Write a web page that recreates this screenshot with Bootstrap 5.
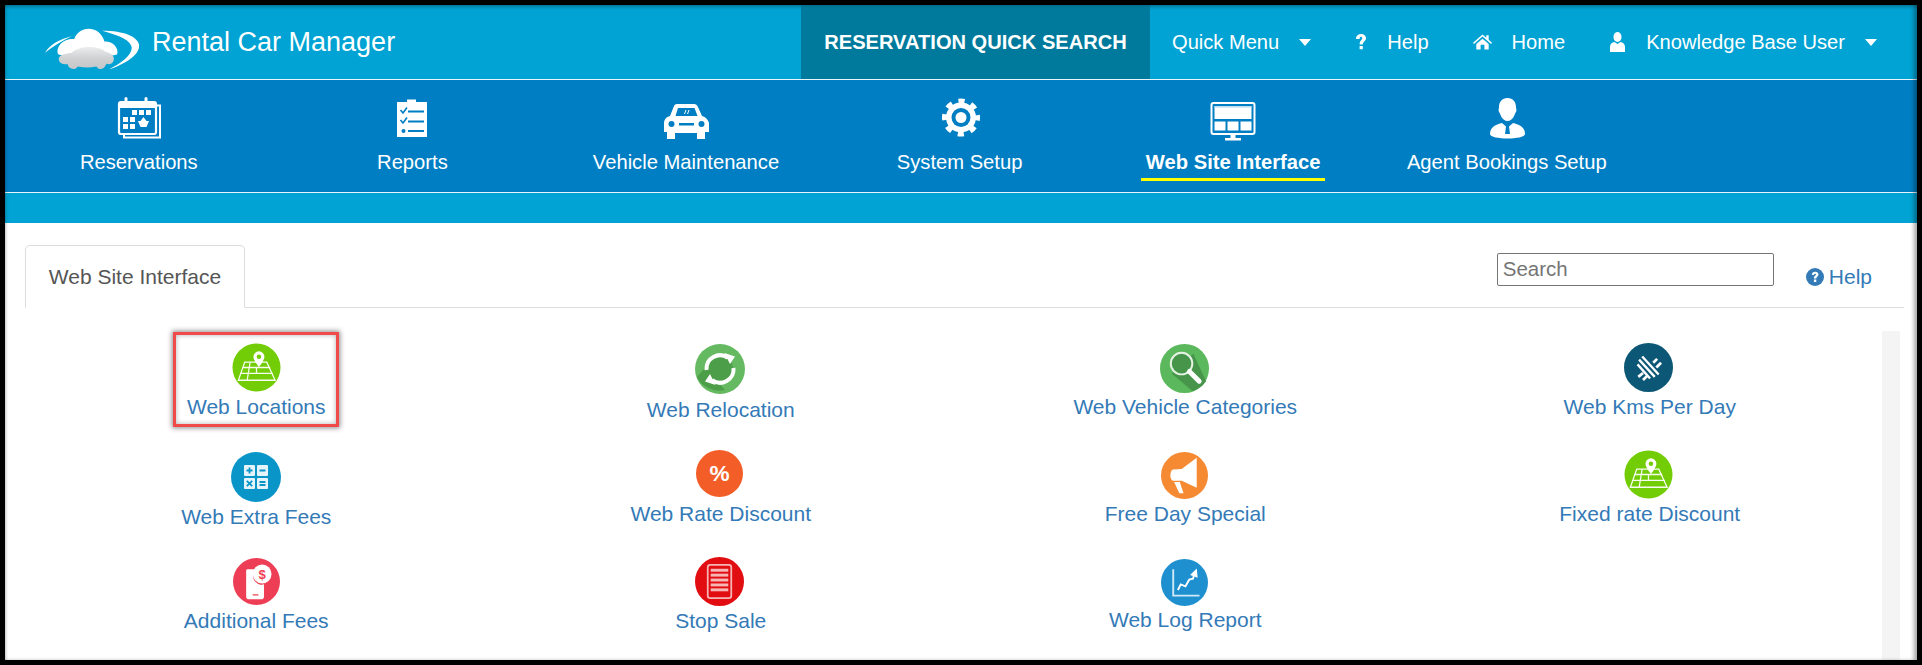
<!DOCTYPE html>
<html lang="en">
<head>
<meta charset="utf-8">
<title>Rental Car Manager</title>
<link href="https://cdn.jsdelivr.net/npm/bootstrap@5.3.0/dist/css/bootstrap.min.css" rel="stylesheet">
<style>
html,body{height:665px;overflow:hidden;background:#000;font-family:"Liberation Sans",Arial,sans-serif;}
.frame{margin:5px 5px 5px 5px;height:655px;background:#fff;overflow:hidden;position:relative;}
.frame-shade{position:absolute;inset:0;pointer-events:none;box-shadow:inset -4px 0 4px -1px rgba(0,0,0,.35),inset 3px 0 3px -2px rgba(0,0,0,.25);z-index:5;}
.top-bar{height:75px;background:linear-gradient(#0086ad 0,#00a3d3 5px);border-bottom:1px solid #e8f6fb;color:#fff;padding-right:40px;}
.brand-logo{width:94px;height:42px;margin:23px 0 0 40px;flex:none;}
.brand-name{font-size:27px;line-height:30px;margin:22px 0 0 13px;color:#fff;}
.quick-search{width:349px;height:74px;background:#007a9c;color:#fff;font-weight:700;font-size:20.1px;display:flex;align-items:center;justify-content:center;text-decoration:none;}
.top-link{color:#fff;text-decoration:none;font-size:20.1px;display:flex;align-items:center;height:74px;margin-left:44px;}
.top-link svg{flex:none;}
.quick-menu{margin-left:22px;}
.gap-ic{margin-right:20px;}
.caret-mark{width:0;height:0;margin-left:20px;border-left:6px solid transparent;border-right:6px solid transparent;border-top:7px solid #fff;}
.mod-bar{height:113px;background:#007ec3;border-bottom:1px solid #e8f6fb;gap:6px;}
.mod-item{width:267.6px;flex:none;padding-top:17px;color:#fff;text-decoration:none;text-align:center;display:block;}
.mod-item svg{display:block;width:50px;height:44px;margin:0 auto 6px;}
.mod-label{display:inline-block;font-size:20.2px;line-height:30px;height:34px;padding:0 5px;}
.mod-item.current .mod-label{font-weight:700;border-bottom:3px solid #ff0;font-size:20.2px;}
.band{height:30px;background:#00a3d3;}
.work{padding:22px 13px 0 19px;}
.tab-head{margin-left:1px;height:63px;border-bottom:1px solid #ddd;align-items:flex-start;}
.tab-head .nav-link,.tab-head .nav-link.active{margin:0;height:63px;width:220px;padding:0;color:#555;font-size:21px;line-height:62px;text-align:center;background:#fff;border:1px solid #ddd;border-bottom-color:#fff;border-radius:5px 5px 0 0;}
.finder{width:277px;height:33px;margin:8px 32px 0 0;padding:0 5px 2px;font-size:20.5px;line-height:28px;border:1px solid #767676;border-radius:2px;color:#333;font-family:inherit;}
.finder::placeholder{color:#757575;}
.help-link{display:flex;align-items:center;gap:5px;font-size:21px;color:#337ab7;text-decoration:none;margin:19px 32px 0 0;line-height:26px;}
.help-link svg{width:18px;height:18px;}
.tile-zone{margin-top:23px;}
.tile-grid{width:1858px;padding-top:11px;flex:none;}
.tile-row{height:107px;}
.slide-rail{width:18px;flex:none;height:340px;background:#f4f4f4;}
.tile{display:block;color:#337ab7;text-decoration:none;font-size:21px;line-height:30px;text-align:center;}
.tile svg{display:block;margin-left:auto;margin-right:auto;}
.tile span{display:block;}
.s47{width:47px;height:47px}.s49{width:49px;height:49px}.s50{width:50px;height:50px}
.left1 svg{transform:translateX(-1px)}
.t0{padding-top:.5px}.t1{padding-top:1.5px}.t2{padding-top:2.5px}
.tile-marked{width:166px;height:95px;margin:-10px auto 0;border:3px solid #f04a4a;padding-top:7.5px;box-shadow:0 0 5px 1px rgba(0,0,0,.45),inset 0 0 5px rgba(0,0,0,.3);}
.gn span{margin-top:-1px}.g1 span{margin-top:1px}.g2 span{margin-top:2px}
</style>
</head>
<body>
<svg width="0" height="0" class="d-block position-absolute">
<defs><linearGradient id="car-shade" x1="0" y1="0" x2="0" y2="1"><stop offset="0" stop-color="#eceded"/><stop offset=".5" stop-color="#cfd1d3"/><stop offset="1" stop-color="#c4c6c8"/></linearGradient></defs>
<symbol id="map-ic" viewBox="0 0 50 50">
<circle cx="25" cy="25" r="24.5" fill="#73cd06"/>
<g fill="none" stroke="#fff" stroke-width="1.300" opacity=".95">
<path d="M13 19.500H23M30 19.500H35.500L44 38H6.500L13 19.500Z"/>
<path d="M11 25H39M9 31H41.500M18.500 19.500L15.500 38M25 25V31"/>
</g>
<path d="M27.500 8.500a5.600 5.600 0 0 1 5.600 5.600c0 3.700-5.600 10.400-5.600 10.400s-5.600-6.700-5.600-10.400a5.600 5.600 0 0 1 5.600-5.600Z" fill="#fff"/>
<circle cx="27.500" cy="14" r="2.300" fill="#73cd06"/>
</symbol>
</svg>
<div class="frame">
<div class="frame-shade"></div>
<header class="top-bar d-flex">
<svg class="brand-logo" viewBox="45 55 280 122">
<path d="M215 62C290 62 330 85 325 112C318 142 270 165 235 177C280 155 310 128 302 106C292 84 250 72 215 62Z" fill="#fff"/>
<path d="M45 127C60 102 90 86 125 78C95 92 70 107 45 127Z" fill="#fff"/>
<path d="M84 132C76 108 100 84 132 86C140 64 160 56 175 56C198 56 216 72 222 94C245 92 266 112 260 132C250 140 100 140 84 132Z" fill="#fff"/>
<path d="M86 148C84 134 105 129 125 127C145 106 205 104 225 124C240 128 252 134 250 148C248 160 238 163 228 160C222 178 205 180 198 168C180 172 160 172 143 168C135 180 116 178 112 161C98 164 88 158 86 148Z" fill="url(#car-shade)"/>
</svg>
<div class="brand-name">Rental Car Manager</div>
<a class="quick-search ms-auto" href="#">RESERVATION QUICK SEARCH</a>
<a class="top-link quick-menu" href="#">Quick Menu<span class="caret-mark"></span></a>
<a class="top-link" href="#"><svg class="gap-ic" width="12" height="18" viewBox="0 0 12 18"><path d="M1 6C1 2.500 3.500 1 6.200 1C9 1 11 2.800 11 5.200C11 8 7.800 8.500 7.800 11.500H4.600C4.600 7.500 7.200 7.300 7.200 5.300C7.200 4.300 6.800 3.800 6 3.800C5 3.800 4.600 4.700 4.600 6ZM4.600 13H7.800V16.200H4.600Z" fill="#fff"/></svg>Help</a>
<a class="top-link" href="#"><svg class="gap-ic" width="19" height="16" viewBox="0 0 20 16"><path d="M10 0L14 3.500V1H16.500V5.700L20 8.800L19 10L10 2.300L1 10L0 8.800ZM3.500 10L10 4.500L16.500 10V16H12V11H8V16H3.500Z" fill="#fff"/></svg>Home</a>
<a class="top-link" href="#"><svg class="gap-ic" width="17" height="20" viewBox="0 0 17 20"><ellipse cx="8.500" cy="5" rx="4" ry="5" fill="#fff"/><path d="M1 20V15C1 12 3 10.500 5.500 10L8.500 12L11.500 10C14 10.500 16 12 16 15V20Z" fill="#fff"/></svg>Knowledge Base User<span class="caret-mark"></span></a>
</header>

<nav class="mod-bar d-flex">
<a class="mod-item" href="#"><svg viewBox="0 0 50 44">
<path d="M43 8.500H46V40.500H10V37" fill="none" stroke="#fff" stroke-width="2"/>
<rect x="5" y="5" width="37" height="32" rx="2" fill="none" stroke="#fff" stroke-width="2.200"/>
<path d="M5 5H42V11H5Z" fill="#fff"/>
<path d="M12 1.500V7M32 1.500V7" stroke="#fff" stroke-width="3" stroke-linecap="round"/>
<g fill="#fff"><rect x="18" y="13" width="5" height="5"/><rect x="25" y="13" width="5" height="5"/><rect x="32" y="13" width="5" height="5"/><rect x="9" y="20" width="5" height="5"/><rect x="16" y="20" width="5" height="5"/><rect x="9" y="27" width="5" height="5"/><rect x="16" y="27" width="5" height="5"/><path d="M29.500 20L32.500 24H35L32.500 30H26.500L24 24H26.500Z"/></g></svg><span class="mod-label">Reservations</span></a>
<a class="mod-item" href="#"><svg viewBox="0 0 50 44">
<path d="M10 5H20V2.500H29V5H40V40H10Z" fill="#fff"/>
<g fill="none" stroke="#007ec3" stroke-width="1.600"><path d="M13.500 13L16 16L20 10.500M13.500 23L16 26L20 20.500"/><path d="M21 14.500H37M21 24.500H37M21 34H37" stroke-width="2"/></g>
<circle cx="16.500" cy="34" r="2" fill="#007ec3"/></svg><span class="mod-label">Reports</span></a>
<a class="mod-item" href="#"><svg viewBox="0 0 50 44">
<path d="M13 9C14 7 15.500 7 17 7H33C35 7 36 8 37 10L41 19C45 20 47 23 48 26V35H44V42H36V36H14V42H6V35H3V26C3 23 5 20 9 19Z" fill="#fff"/>
<path d="M14.500 19L17 11H33.500L36.500 19Z" fill="#007ec3"/>
<circle cx="10.500" cy="27" r="3" fill="#007ec3"/><circle cx="40.500" cy="27" r="3" fill="#007ec3"/><rect x="18" y="26" width="15" height="2.500" fill="#007ec3"/>
<path d="M25 13L23.500 17M28 13L26.500 17" stroke="#fff" stroke-width="1"/></svg><span class="mod-label">Vehicle Maintenance</span></a>
<a class="mod-item" href="#"><svg viewBox="0 0 50 44">
<circle cx="26" cy="20.500" r="16" fill="none" stroke="#fff" stroke-width="6" stroke-dasharray="6 6.570" stroke-dashoffset="3"/>
<circle cx="26" cy="20.500" r="15" fill="#fff"/><circle cx="26" cy="20.500" r="9.500" fill="#007ec3"/><circle cx="26" cy="20.500" r="5.500" fill="#fff"/></svg><span class="mod-label">System Setup</span></a>
<a class="mod-item current" href="#"><svg viewBox="0 0 50 44">
<rect x="3.500" y="6" width="43" height="31" rx="2" fill="none" stroke="#fff" stroke-width="2"/>
<rect x="6.500" y="9" width="37" height="13" fill="#fff"/><rect x="6.500" y="9" width="37" height="1.500" fill="#b8def0"/>
<g fill="#fff"><rect x="6.500" y="24.500" width="11" height="9"/><rect x="19.500" y="24.500" width="11" height="9"/><rect x="32.500" y="24.500" width="11" height="9"/><rect x="22.500" y="37" width="5" height="4"/><rect x="17" y="41" width="16" height="2.500"/></g></svg><span class="mod-label">Web Site Interface</span></a>
<a class="mod-item" href="#"><svg viewBox="0 0 50 44">
<path d="M25.500 1C31 1 34 5 34 10C34 12 35 13 34 15C33 16 33 17 32.500 18C31 22 28 24 25.500 24C23 24 20 22 18.500 18C18 17 18 16 17 15C16 13 17 12 17 10C17 5 20 1 25.500 1Z" fill="#fff"/>
<path d="M8 37C8 31 12 28 20 26L24 29.500L23 37H28L27 29.500L31 26C39 28 43 31 43 37C43 40 34 41.500 25.500 41.500C17 41.500 8 40 8 37Z" fill="#fff"/></svg><span class="mod-label">Agent Bookings Setup</span></a>
</nav>
<div class="band"></div>

<main class="work">
<ul class="nav nav-tabs tab-head">
<li class="nav-item"><a class="nav-link active" href="#">Web Site Interface</a></li>
<li class="ms-auto d-flex"><input class="finder" type="text" placeholder="Search"><a class="help-link" href="#"><svg viewBox="0 0 18 18"><circle cx="9" cy="9" r="9" fill="#337ab7"/><path d="M5.800 6.800C5.900 4.800 7.300 3.700 9.200 3.700C11.100 3.700 12.500 4.800 12.500 6.500C12.500 8.600 10.300 8.700 10.300 10.500H7.900C7.900 7.700 10 7.800 10 6.600C10 6.100 9.700 5.800 9.100 5.800C8.500 5.800 8.100 6.200 8 7ZM7.900 11.500H10.300V14H7.900Z" fill="#fff"/></svg>Help</a></li>
</ul>
<div class="tile-zone d-flex">
<div class="tile-grid">
<div class="row g-0 tile-row">
<div class="col-3"><a class="tile tile-marked" href="#"><svg class="s49"><use href="#map-ic"/></svg><span>Web Locations</span></a></div>
<div class="col-3"><a class="tile t1 left1 g1" href="#"><svg class="s50" viewBox="0 0 50 50"><circle cx="25" cy="25" r="25" fill="#65b960"/><path d="M10 24L30 46A25 25 0 0 1 2 33Z" fill="#4c9e48"/><circle cx="25" cy="25" r="13" fill="#4c9e48"/><g fill="none" stroke="#fff" stroke-width="4"><path d="M11.500 26A13.500 13.500 0 0 1 33 14"/><path d="M38.500 24A13.500 13.500 0 0 1 17 36"/></g><path d="M29.500 9L40 12.500L35 20ZM20.500 41L10 37.500L15 30Z" fill="#fff"/></svg><span>Web Relocation</span></a></div>
<div class="col-3"><a class="tile t1 left1 gn" href="#"><svg class="s49" viewBox="0 0 50 50"><circle cx="25" cy="25" r="25" fill="#5cb85c"/><path d="M12 30L34 10L47 38A25 25 0 0 1 33 48Z" fill="#46954a"/><circle cx="22" cy="20" r="11" fill="#46954a" stroke="#e6f3e4" stroke-width="2"/><path d="M30 28L40 38" stroke="#fff" stroke-width="5" stroke-linecap="round"/></svg><span>Web Vehicle Categories</span></a></div>
<div class="col-3"><a class="tile t0 left1" href="#"><svg class="s49" viewBox="0 0 50 50"><circle cx="25" cy="25" r="25" fill="#0c5775"/><g stroke="#fff" stroke-width="3" transform="translate(25 25) scale(.8) translate(-25 -24)"><path d="M17 10L38 33M13 14L33 36M11 20L27 38"/><path d="M36 13L31 18M41 18L35 24M18 31L12 36M23 35L18 40" stroke-width="3.500"/></g></svg><span>Web Kms Per Day</span></a></div>
</div>
<div class="row g-0 tile-row">
<div class="col-3"><a class="tile t2" href="#"><svg class="s50" viewBox="0 0 50 50"><circle cx="25" cy="25" r="25" fill="#0a95c9"/><g fill="#e4f4fa"><rect x="13" y="13" width="11" height="11" rx="1"/><rect x="26" y="13" width="11" height="11" rx="1"/><rect x="13" y="26" width="11" height="11" rx="1"/><rect x="26" y="26" width="11" height="11" rx="1"/></g><path d="M15.500 18.500H21.500M18.500 15.500V21.500M28.500 18.500H34.500M15.800 28.800L21.200 34.200M21.200 28.800L15.800 34.200M28.500 30H34.500M28.500 33H34.500" stroke="#0a95c9" stroke-width="1.800"/></svg><span>Web Extra Fees</span></a></div>
<div class="col-3"><a class="tile t0 left1 g2" href="#"><svg class="s47" viewBox="0 0 50 50"><circle cx="25" cy="25" r="25" fill="#f35d27"/><text x="25" y="33" text-anchor="middle" fill="#fff" font-size="24" font-weight="700" font-family="Liberation Sans">%</text></svg><span>Web Rate Discount</span></a></div>
<div class="col-3"><a class="tile t2 left1" href="#"><svg class="s47" viewBox="0 0 50 50"><circle cx="25" cy="25" r="25" fill="#f68a32"/><path d="M38 6V38L22 30.500L13 30.500C9 30 9 19 13 18.500L22 18ZM14 32H20L24 44H19.500Z" fill="#fff"/></svg><span>Free Day Special</span></a></div>
<div class="col-3"><a class="tile t0 left1" href="#"><svg class="s49"><use href="#map-ic"/></svg><span>Fixed rate Discount</span></a></div>
</div>
<div class="row g-0 tile-row">
<div class="col-3"><a class="tile t1 g1" href="#"><svg class="s47" viewBox="0 0 50 50"><circle cx="25" cy="25" r="25" fill="#ee3e55"/><path d="M15 12H24C20 16 20 24 26 27C28 28.500 31 29 33 28V41C33 43 32 44 30 44H17C15 44 14 43 14 41V14C14 13 14.500 12 15 12ZM21 38.500V40H27V38.500Z" fill="#fff"/><circle cx="31" cy="17" r="10" fill="#fff"/><text x="31" y="22" text-anchor="middle" fill="#ee3e55" font-size="14" font-weight="700" font-family="Liberation Sans">$</text></svg><span>Additional Fees</span></a></div>
<div class="col-3"><a class="tile t0 left1" href="#"><svg class="s49" viewBox="0 0 50 50"><circle cx="25" cy="25" r="25" fill="#e10d10"/><rect x="13" y="8" width="24" height="34" rx="2.500" fill="none" stroke="#f7b5b5" stroke-width="1.800"/><g fill="#f7b5b5"><rect x="16" y="12" width="18" height="3"/><rect x="16" y="17" width="18" height="3"/><rect x="16" y="22" width="18" height="3"/><rect x="16" y="27" width="18" height="3"/><rect x="16" y="32" width="18" height="3"/></g></svg><span>Stop Sale</span></a></div>
<div class="col-3"><a class="tile t2 left1 gn" href="#"><svg class="s47" viewBox="0 0 50 50"><circle cx="25" cy="25" r="25" fill="#1f90cf"/><path d="M13 11V39H41" fill="none" stroke="#cfe8f6" stroke-width="2"/><path d="M18 33L21 27L26 29L30 22L34 21L36 14" fill="none" stroke="#fff" stroke-width="2"/><path d="M31 17L38 10L39 20Z" fill="#fff"/></svg><span>Web Log Report</span></a></div>
<div class="col-3"></div>
</div>
</div>
<div class="slide-rail"></div>
</div>
</main>
</div>
<script src="https://cdn.jsdelivr.net/npm/bootstrap@5.3.0/dist/js/bootstrap.bundle.min.js"></script>
</body>
</html>
